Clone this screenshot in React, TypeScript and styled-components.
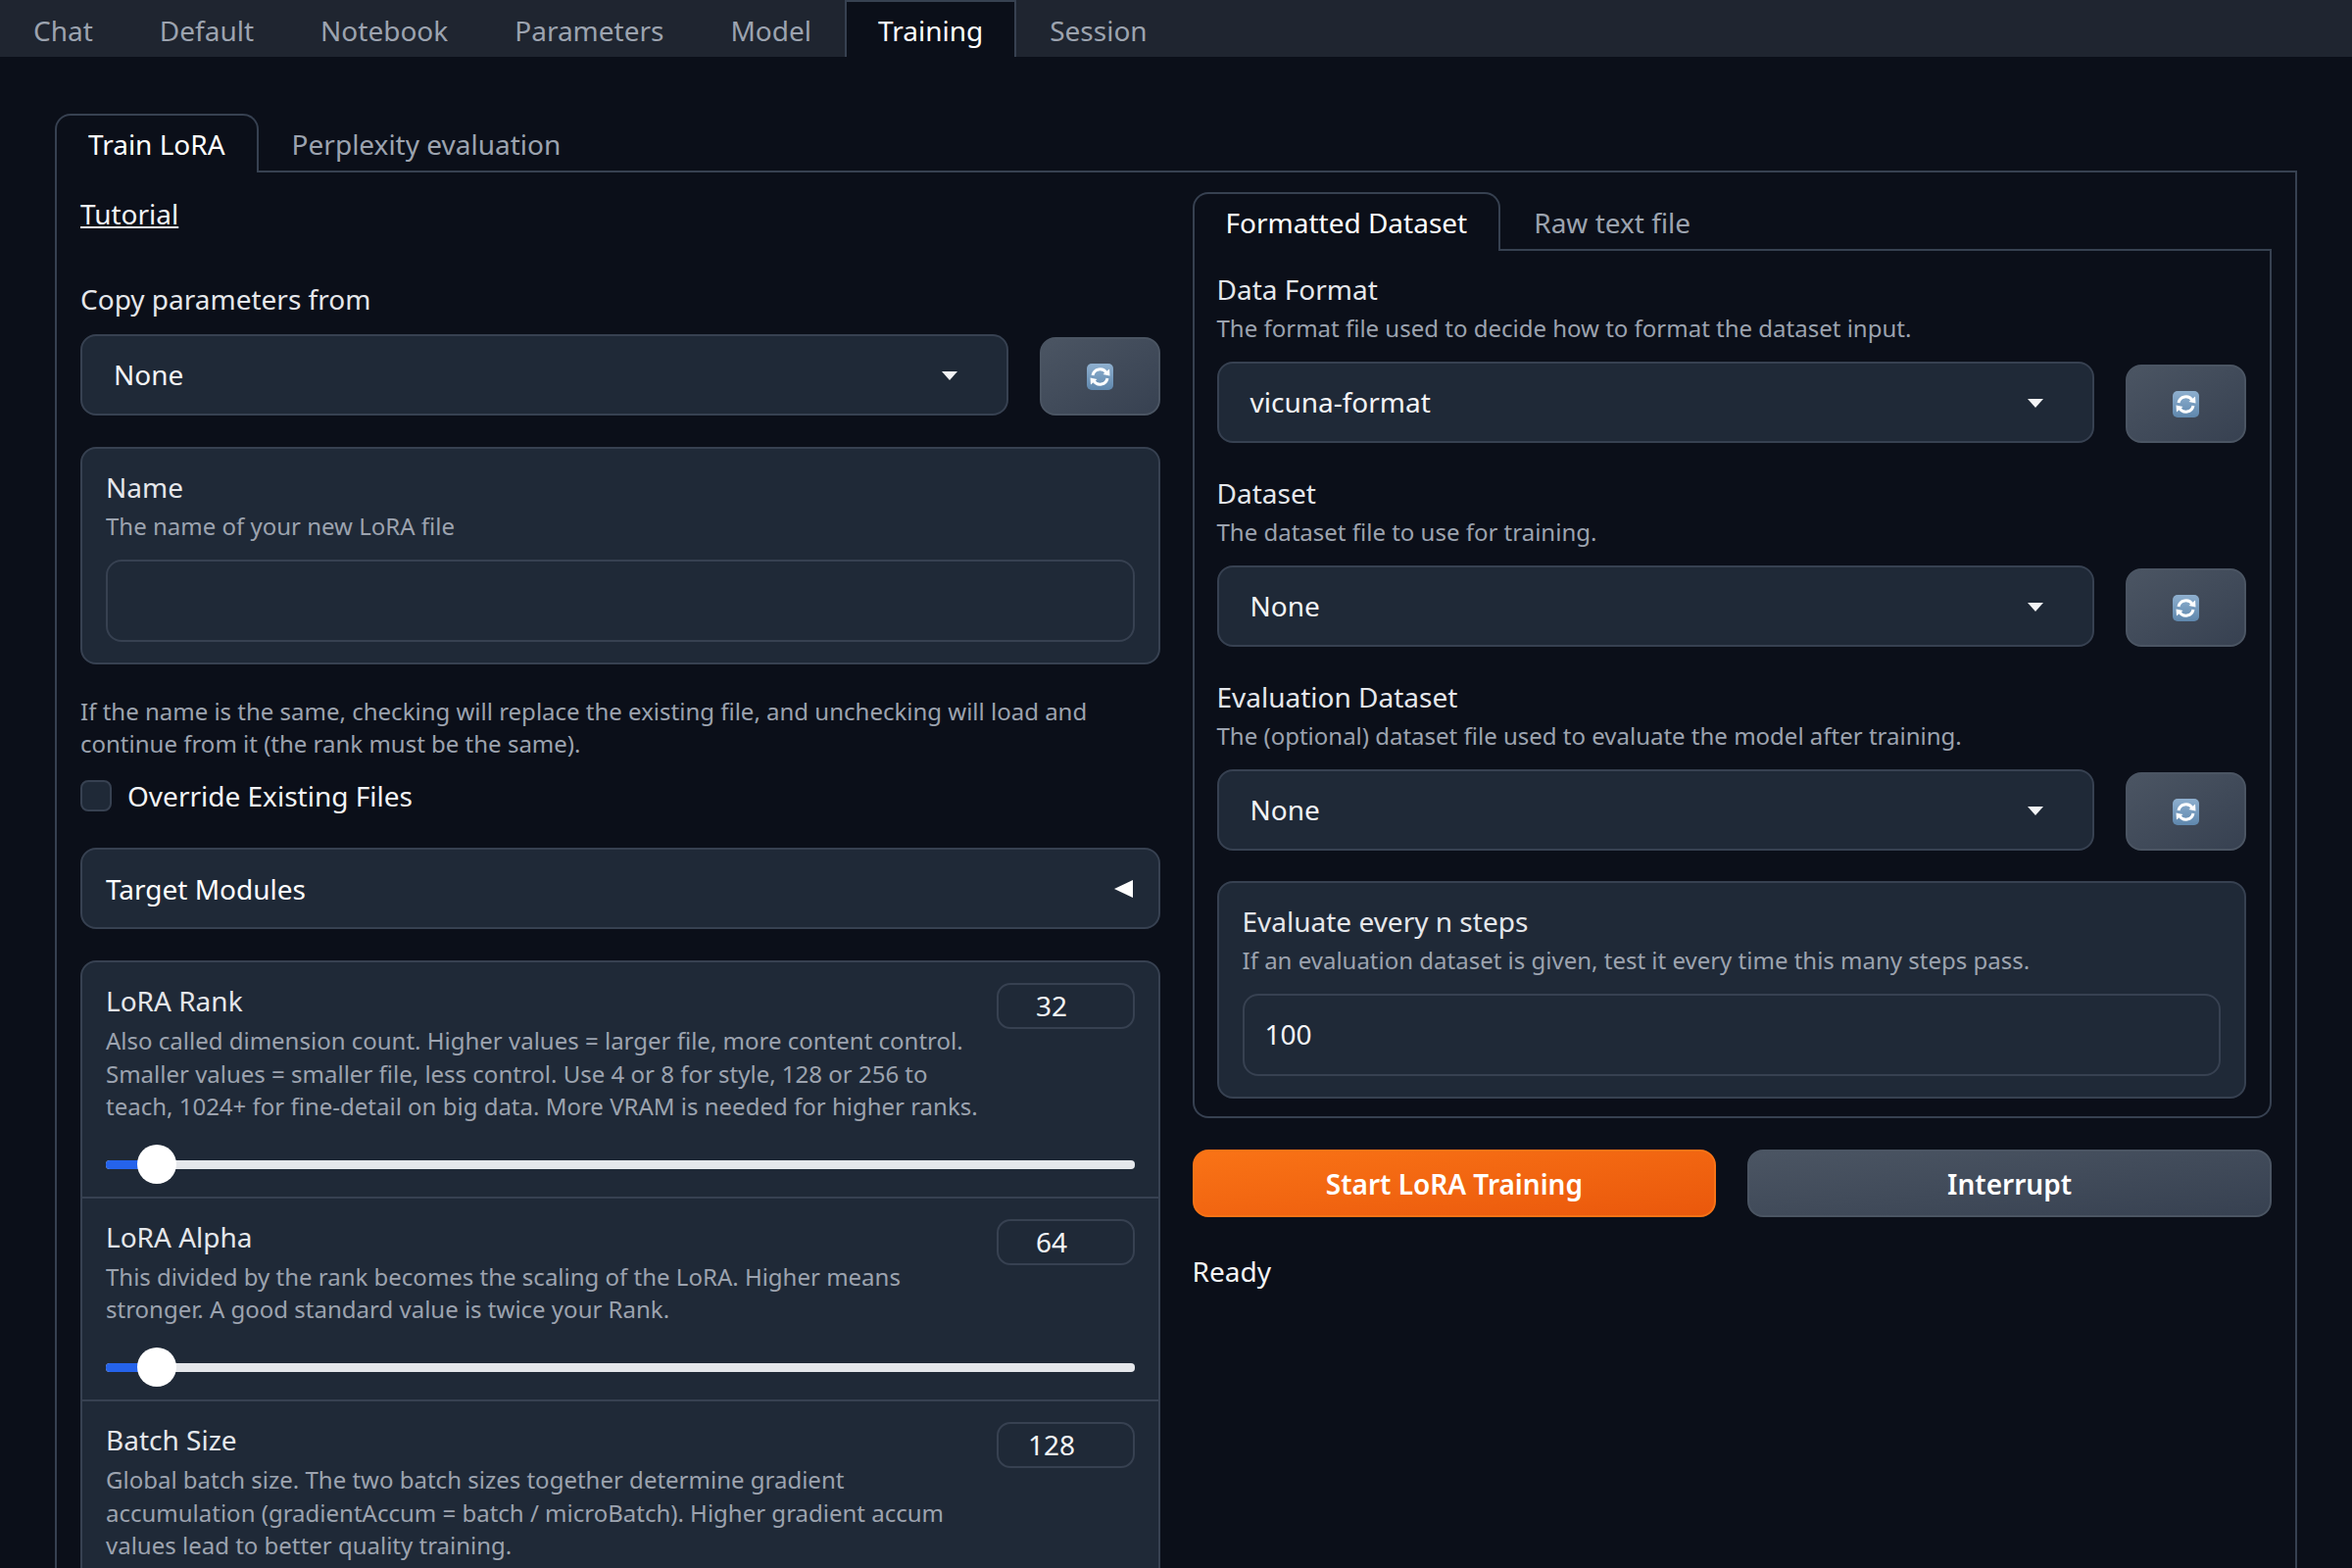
import React from 'react';
import styled, { createGlobalStyle } from 'styled-components';

const GlobalStyle = createGlobalStyle`
  html, body {
    margin: 0;
    height: 1600px;
    overflow: hidden;
    background: #0b0f19;
  }

  body {
    color: #f3f4f6;
    font-family: 'Noto Sans', sans-serif;
    font-size: 28px;
  }

  * {
    box-sizing: border-box;
  }
`;

const TopBar = styled.nav`
  display: flex;
  height: 58px;
  background: #1f2530;
`;

const TopTab = styled.div<{ $active?: boolean }>`
  display: flex;
  align-items: center;
  padding: 2px 32px 0;
  font-size: 28px;
  color: ${(p) => (p.$active ? '#ffffff' : '#9ca3af')};
  background: ${(p) => (p.$active ? '#0b0f19' : 'transparent')};
  border: 2px solid ${(p) => (p.$active ? '#374151' : 'transparent')};
  border-bottom: 0;
`;

const Page = styled.main`
  padding: 58px 56px 0 56px;
`;

const TabStrip = styled.div`
  display: flex;
  height: 60px;
  border-bottom: 2px solid #374151;
`;

const Tab = styled.div<{ $active?: boolean }>`
  height: ${(p) => (p.$active ? 60 : 58)}px;
  padding: 0 32px;
  line-height: 58px;
  color: ${(p) => (p.$active ? '#ffffff' : '#9ca3af')};
  background: ${(p) => (p.$active ? '#0b0f19' : 'transparent')};
  border: 2px solid ${(p) => (p.$active ? '#374151' : 'transparent')};
  border-bottom: 0;
  border-radius: 16px 16px 0 0;
`;

const OuterPanel = styled.section`
  display: grid;
  grid-template-columns: 1fr 1fr;
  gap: 33px;
  min-height: 1500px;
  padding: 20px 24px 0 24px;
  border: 2px solid #374151;
  border-top: 0;
`;

const Column = styled.div`
  display: flex;
  flex-direction: column;
`;

const TutorialLink = styled.a`
  display: block;
  width: fit-content;
  margin: 1px 0 46px;
  line-height: 42px;
  color: #f3f4f6;
  text-decoration: underline;
`;

const Title = styled.div`
  line-height: 40px;
  color: #e5e7eb;
`;

const Hint = styled.div`
  margin: 3px 0 17px;
  font-size: 24px;
  line-height: 34px;
  color: #9ca3af;
`;

const Field = styled.div<{ $gap?: number }>`
  margin-bottom: ${(p) => p.$gap ?? 31}px;
`;

const PickerRow = styled.div<{ $top?: number }>`
  display: flex;
  align-items: flex-end;
  gap: 32px;
  margin-top: ${(p) => p.$top ?? 0}px;
`;

const SelectBox = styled.div`
  flex: 1;
  display: flex;
  align-items: center;
  justify-content: space-between;
  height: 83px;
  padding: 0 50px 2px 32px;
  background: #1f2937;
  border: 2px solid #374151;
  border-radius: 16px;
`;

const Caret = styled.span`
  width: 0;
  height: 0;
  border-left: 8px solid transparent;
  border-right: 8px solid transparent;
  border-top: 9px solid #f3f4f6;
  margin-top: 3px;
`;

const RefreshButton = styled.button`
  display: flex;
  align-items: center;
  justify-content: center;
  width: 123px;
  height: 80px;
  padding: 0;
  background: linear-gradient(to bottom right, #4b5563, #374151);
  border: 2px solid #4b5563;
  border-radius: 16px;
`;

const Block = styled.div`
  padding: 19px 24px 21px;
  background: #1f2937;
  border: 2px solid #374151;
  border-radius: 16px;
`;

const TextInput = styled.div`
  display: flex;
  align-items: center;
  height: 84px;
  padding: 0 21px 2px;
  background: #1f2937;
  border: 2px solid #374151;
  border-radius: 16px;
`;

const Note = styled.p`
  margin: 31px 0 17px;
  font-size: 24px;
  line-height: 33px;
  color: #9ca3af;
`;

const CheckRow = styled.label`
  display: flex;
  align-items: center;
  gap: 16px;
  line-height: 40px;
  margin-bottom: 33px;
`;

const CheckBox = styled.span`
  width: 32px;
  height: 32px;
  background: #1f2937;
  border: 2px solid #374151;
  border-radius: 8px;
`;

const Accordion = styled.div`
  display: flex;
  align-items: center;
  justify-content: space-between;
  height: 83px;
  padding: 0 26px 0 24px;
  color: #ffffff;
  background: #1f2937;
  border: 2px solid #374151;
  border-radius: 16px;
  margin-bottom: 32px;
`;

const LeftCaret = styled.span`
  width: 0;
  height: 0;
  border-top: 9px solid transparent;
  border-bottom: 9px solid transparent;
  border-right: 19px solid #ffffff;
`;

const SliderGroup = styled.div`
  background: #1f2937;
  border: 2px solid #374151;
  border-radius: 16px 16px 0 0;
`;

const SliderRow = styled.div`
  padding: 19px 24px 13px;
  border-bottom: 2px solid #374151;
`;

const SliderHead = styled.div`
  display: flex;
  align-items: flex-start;
  gap: 14px;
`;

const SliderText = styled.div`
  flex: 1;
`;

const SliderHint = styled.div`
  margin-top: 4px;
  font-size: 24px;
  line-height: 33.6px;
  color: #9ca3af;
`;

const NumberBox = styled.div`
  flex: none;
  width: 141px;
  height: 47px;
  margin-top: 2px;
  padding-right: 28px;
  line-height: 43px;
  text-align: center;
  border: 2px solid #374151;
  border-radius: 14px;
`;

const SliderTrack = styled.div`
  position: relative;
  height: 40px;
  margin-top: 22px;

  &::before {
    content: '';
    position: absolute;
    left: 0;
    right: 0;
    top: 16px;
    height: 9px;
    background: #e5e7eb;
    border-radius: 4px;
  }
`;

const SliderFill = styled.div`
  position: absolute;
  left: 0;
  top: 16px;
  height: 9px;
  background: #2563eb;
  border-radius: 4px 0 0 4px;
`;

const SliderThumb = styled.div`
  position: absolute;
  top: 0;
  width: 40px;
  height: 40px;
  background: #ffffff;
  border-radius: 50%;
`;

const InnerPanel = styled.div`
  padding: 19px 24px 18px 23px;
  border: 2px solid #374151;
  border-top: 0;
  border-radius: 0 0 16px 16px;
`;

const ActionRow = styled.div`
  display: grid;
  grid-template-columns: 1fr 1fr;
  gap: 32px;
  margin: 32px 0 35px;
`;

const ActionButton = styled.button<{ $primary?: boolean }>`
  height: 69px;
  padding: 0;
  font-family: inherit;
  font-size: 28px;
  font-weight: 600;
  color: #ffffff;
  background: ${(p) =>
    p.$primary
      ? 'linear-gradient(to bottom right, #f97316, #ea580c)'
      : 'linear-gradient(to bottom right, #4b5563, #374151)'};
  border: 2px solid ${(p) => (p.$primary ? '#f97316' : '#4b5563')};
  border-radius: 16px;
`;

const Status = styled.div`
  line-height: 40px;
`;

function RefreshEmoji() {
  return (
    <svg width="27" height="27" viewBox="0 0 27 27">
      <defs>
        <linearGradient id="emojiFace" x1="0" y1="0" x2="0" y2="1">
          <stop offset="0" stopColor="#8fb0cf" />
          <stop offset="1" stopColor="#5f87ad" />
        </linearGradient>
      </defs>
      <rect width="27" height="27" rx="5" fill="url(#emojiFace)" />
      <g fill="none" stroke="#ffffff" strokeWidth="3">
        <path d="M6 12 A7.6 7.6 0 0 1 20 9.5" />
        <path d="M21 15 A7.6 7.6 0 0 1 7 17.5" />
      </g>
      <path d="M23 5.5 L23.5 12.5 L16.5 11 Z" fill="#ffffff" />
      <path d="M4 21.5 L3.5 14.5 L10.5 16 Z" fill="#ffffff" />
    </svg>
  );
}

function Picker({ value, top }: { value: string; top?: number }) {
  return (
    <PickerRow $top={top}>
      <SelectBox>
        <span>{value}</span>
        <Caret />
      </SelectBox>
      <RefreshButton>
        <RefreshEmoji />
      </RefreshButton>
    </PickerRow>
  );
}

const topTabs = ['Chat', 'Default', 'Notebook', 'Parameters', 'Model', 'Training', 'Session'];

const sliders = [
  {
    name: 'LoRA Rank',
    value: '32',
    hint: 'Also called dimension count. Higher values = larger file, more content control. Smaller values = smaller file, less control. Use 4 or 8 for style, 128 or 256 to teach, 1024+ for fine-detail on big data. More VRAM is needed for higher ranks.',
  },
  {
    name: 'LoRA Alpha',
    value: '64',
    hint: 'This divided by the rank becomes the scaling of the LoRA. Higher means stronger. A good standard value is twice your Rank.',
  },
  {
    name: 'Batch Size',
    value: '128',
    hint: 'Global batch size. The two batch sizes together determine gradient accumulation (gradientAccum = batch / microBatch). Higher gradient accum values lead to better quality training.',
  },
];

const datasetFields = [
  {
    name: 'Data Format',
    hint: 'The format file used to decide how to format the dataset input.',
    value: 'vicuna-format',
  },
  {
    name: 'Dataset',
    hint: 'The dataset file to use for training.',
    value: 'None',
  },
  {
    name: 'Evaluation Dataset',
    hint: 'The (optional) dataset file used to evaluate the model after training.',
    value: 'None',
  },
];

export default function App() {
  return (
    <>
      <GlobalStyle />
      <TopBar>
        {topTabs.map((name) => (
          <TopTab key={name} $active={name === 'Training'}>
            {name}
          </TopTab>
        ))}
      </TopBar>

      <Page>
        <TabStrip>
          <Tab $active>Train LoRA</Tab>
          <Tab>Perplexity evaluation</Tab>
        </TabStrip>

        <OuterPanel>
          <Column>
            <TutorialLink href="#">Tutorial</TutorialLink>

            <Field $gap={32}>
              <Title>Copy parameters from</Title>
              <Picker value="None" top={16} />
            </Field>

            <Block>
              <Title>Name</Title>
              <Hint>The name of your new LoRA file</Hint>
              <TextInput />
            </Block>

            <Note>
              If the name is the same, checking will replace the existing file, and unchecking
              will load and continue from it (the rank must be the same).
            </Note>

            <CheckRow>
              <CheckBox />
              Override Existing Files
            </CheckRow>

            <Accordion>
              Target Modules
              <LeftCaret />
            </Accordion>

            <SliderGroup>
              {sliders.map(({ name, value, hint }) => (
                <SliderRow key={name}>
                  <SliderHead>
                    <SliderText>
                      <Title>{name}</Title>
                      <SliderHint>{hint}</SliderHint>
                    </SliderText>
                    <NumberBox>{value}</NumberBox>
                  </SliderHead>
                  <SliderTrack>
                    <SliderFill style={{ width: 40 }} />
                    <SliderThumb style={{ left: 32 }} />
                  </SliderTrack>
                </SliderRow>
              ))}
            </SliderGroup>
          </Column>

          <Column>
            <TabStrip>
              <Tab $active>Formatted Dataset</Tab>
              <Tab>Raw text file</Tab>
            </TabStrip>

            <InnerPanel>
              {datasetFields.map(({ name, hint, value }) => (
                <Field key={name}>
                  <Title>{name}</Title>
                  <Hint>{hint}</Hint>
                  <Picker value={value} />
                </Field>
              ))}

              <Block>
                <Title>Evaluate every n steps</Title>
                <Hint>If an evaluation dataset is given, test it every time this many steps pass.</Hint>
                <TextInput>100</TextInput>
              </Block>
            </InnerPanel>

            <ActionRow>
              <ActionButton $primary>Start LoRA Training</ActionButton>
              <ActionButton>Interrupt</ActionButton>
            </ActionRow>

            <Status>Ready</Status>
          </Column>
        </OuterPanel>
      </Page>
    </>
  );
}
